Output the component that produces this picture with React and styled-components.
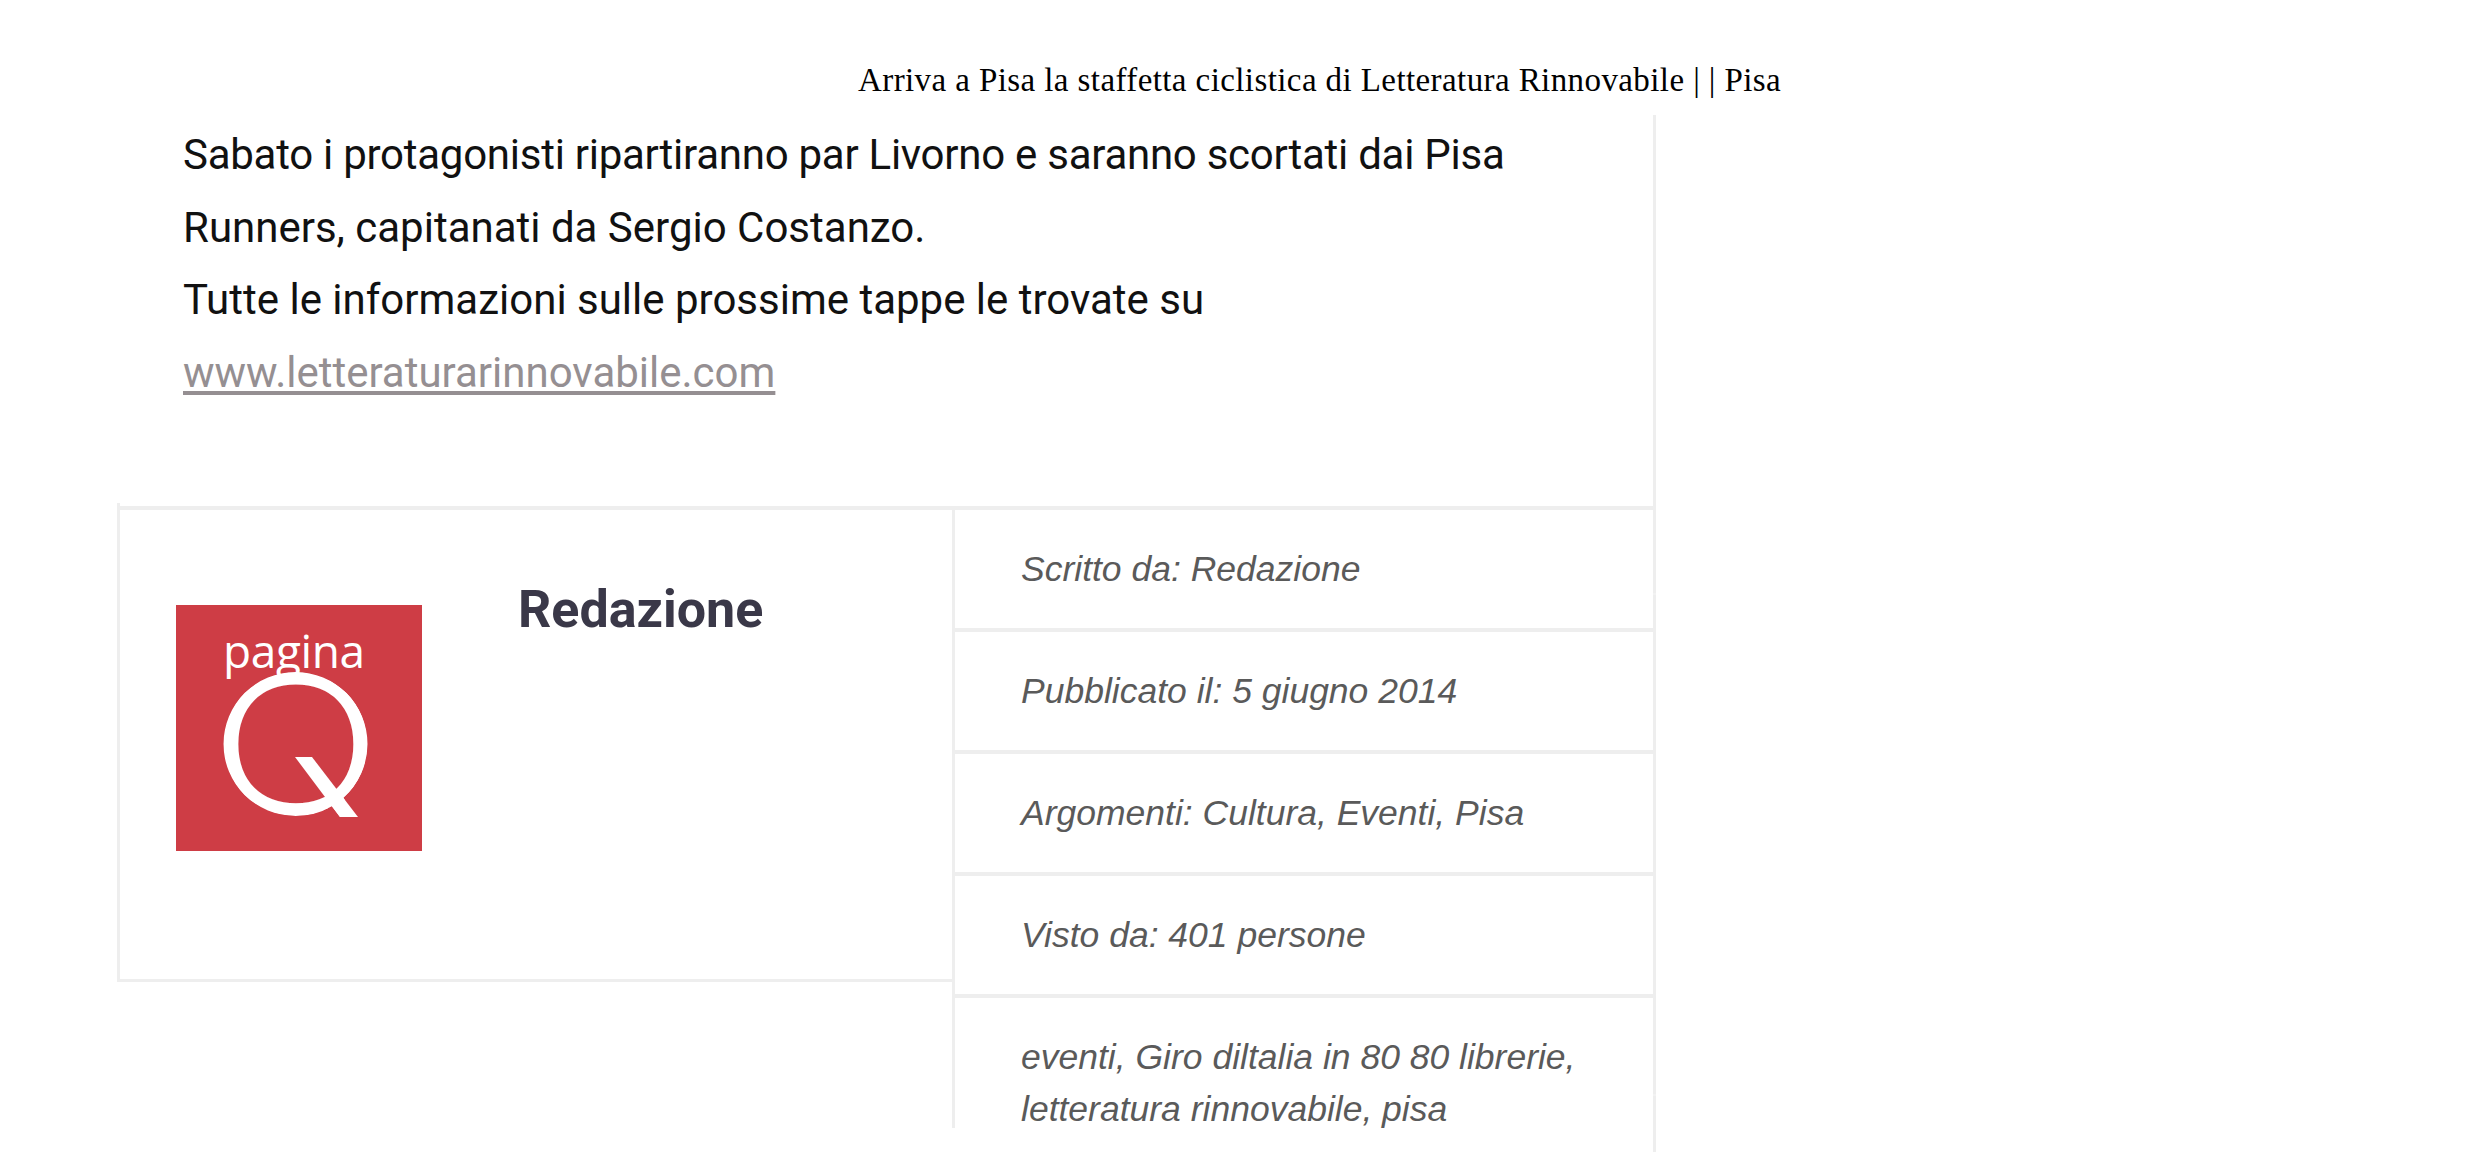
import React from "react";
import styled, { createGlobalStyle } from "styled-components";

const GlobalStyle = createGlobalStyle`
  html, body {
    margin: 0;
    padding: 0;
    background: #fff;
  }
`;

const Page = styled.div`
  width: 2479px;
  height: 1152px;
  overflow: hidden;
`;

const PageTitle = styled.header`
  height: 115px;
  box-sizing: border-box;
  padding: 58px 0 0 858px;
  font-family: "Liberation Serif", serif;
  font-size: 33px;
  letter-spacing: 0.41px;
  line-height: 44px;
  color: #000;
  white-space: nowrap;
`;

const Main = styled.main`
  position: relative;
  width: 1656px;
  height: 1037px;
  box-sizing: border-box;
  padding-left: 117px;
  border-right: 3px solid #eeeeee;
`;

const Tick = styled.span`
  position: absolute;
  left: 100%;
  top: ${(p) => p.$top}px;
  width: 3px;
  height: 2px;
  background: #f2f2f2;
`;

const Article = styled.article`
  height: 391px;
  box-sizing: border-box;
  padding: 4px 0 0 66px;
  font-family: Roboto, sans-serif;
  font-size: 42px;
  line-height: 72.6px;
  color: #111;
`;

const Line = styled.div`
  white-space: nowrap;
  letter-spacing: ${(p) => (p.$tight ? "-0.26px" : "0")};
`;

const SiteLink = styled.a`
  color: #958f92;
  text-decoration: underline;
  text-underline-offset: 4px;
`;

const Footer = styled.section`
  display: flex;
  align-items: flex-start;
  height: 622px;
`;

const AuthorBox = styled.div`
  position: relative;
  display: flex;
  align-items: flex-start;
  width: 835px;
  height: 476px;
  box-sizing: border-box;
  padding: 95px 0 0 56px;
  border: solid #eeeeee;
  border-width: 4px 0 3px 3px;

  &::before {
    content: "";
    position: absolute;
    left: -3px;
    top: -7px;
    width: 3px;
    height: 3px;
    background: #eeeeee;
  }
`;

const Logo = styled.svg`
  display: block;
  flex: none;
  width: 246px;
  height: 246px;
`;

const AuthorName = styled.h2`
  margin: -30px 0 0 96px;
  font-family: Roboto, sans-serif;
  font-size: 52px;
  line-height: 70px;
  font-weight: 700;
  color: #3a3848;
`;

const MetaList = styled.ul`
  flex: none;
  width: 701px;
  height: 622px;
  box-sizing: border-box;
  margin: 0;
  padding: 0;
  list-style: none;
  border-left: 3px solid #eeeeee;
  overflow: hidden;
`;

const MetaItem = styled.li`
  box-sizing: border-box;
  min-height: 122px;
  padding: 33px 40px 0 66px;
  border-top: 4px solid #eeeeee;
  font-family: "Liberation Sans", Arial, sans-serif;
  font-style: italic;
  font-size: 35.5px;
  line-height: 52px;
  color: #5a5a5a;
`;

function PaginaLogo() {
  return (
    <Logo viewBox="0 0 246 246" role="img" aria-label="pagina Q">
      <defs>
        <clipPath id="q-shape">
          <circle cx="119.5" cy="139" r="72" />
          <polygon points="119,152 136,152 182,212 164,212" />
        </clipPath>
      </defs>
      <rect width="246" height="246" fill="#ce3d45" />
      <text x="47" y="63" fill="#fff" fontFamily="Open Sans, sans-serif" fontSize="46" textLength="142">
        pagina
      </text>
      <g clipPath="url(#q-shape)">
        <text
          transform="translate(37 208) scale(1.08 1)"
          fill="#fff"
          stroke="#fff"
          strokeWidth="4"
          fontFamily="Lato, sans-serif"
          fontWeight="300"
          fontSize="194"
        >
          Q
        </text>
      </g>
      <polygon points="119,152 136,152 182,212 164,212" fill="#fff" />
    </Logo>
  );
}

export default function App() {
  return (
    <Page>
      <GlobalStyle />
      <PageTitle>Arriva a Pisa la staffetta ciclistica di Letteratura Rinnovabile | | Pisa</PageTitle>
      <Main>
        <Tick $top={478} />
        <Tick $top={979} />
        <Article>
          <Line $tight>Sabato i protagonisti ripartiranno par Livorno e saranno scortati dai Pisa</Line>
          <Line>Runners, capitanati da Sergio Costanzo.</Line>
          <Line>Tutte le informazioni sulle prossime tappe le trovate su</Line>
          <Line>
            <SiteLink href="#">www.letteraturarinnovabile.com</SiteLink>
          </Line>
        </Article>
        <Footer>
          <AuthorBox>
            <PaginaLogo />
            <AuthorName>Redazione</AuthorName>
          </AuthorBox>
          <MetaList>
            <MetaItem>Scritto da: Redazione</MetaItem>
            <MetaItem>Pubblicato il: 5 giugno 2014</MetaItem>
            <MetaItem>Argomenti: Cultura, Eventi, Pisa</MetaItem>
            <MetaItem>Visto da: 401 persone</MetaItem>
            <MetaItem>eventi, Giro diltalia in 80 80 librerie, letteratura rinnovabile, pisa</MetaItem>
          </MetaList>
        </Footer>
      </Main>
    </Page>
  );
}
